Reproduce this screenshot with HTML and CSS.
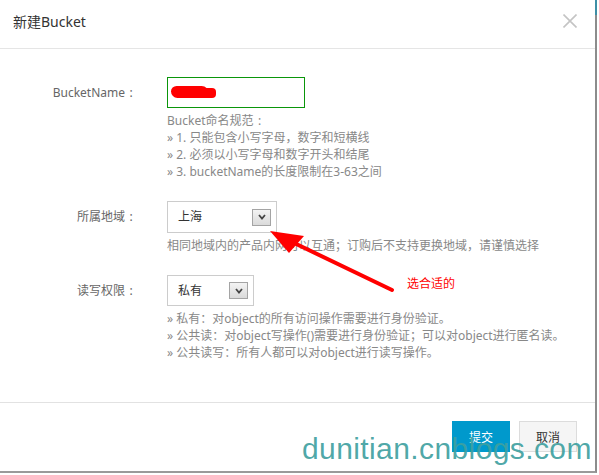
FILE: index.html
```html
<!DOCTYPE html>
<html lang="zh-CN">
<head>
<meta charset="utf-8">
<title>新建Bucket</title>
<link rel="stylesheet" href="styles.css">
</head>
<body>
<div class="dialog">
  <div class="edge-mark"></div>
  <div class="header">
    <h3 class="title">新建Bucket</h3>
    <span class="close">
      <svg width="14" height="14" viewBox="0 0 14 14"><path d="M0.5 0.5 L13.5 13.5 M13.5 0.5 L0.5 13.5" stroke="#c4c4c4" stroke-width="1.6" fill="none"/></svg>
    </span>
  </div>
  <div class="body">
    <div class="row">
      <label class="label">BucketName<span class="colon">:</span></label>
      <div class="field">
        <div class="input"><span class="scribble"></span><span class="scribble tail"></span></div>
        <div class="help">
          <div>Bucket命名规范<span class="colon">:</span></div>
          <div>» 1. 只能包含小写字母，数字和短横线</div>
          <div>» 2. 必须以小写字母和数字开头和结尾</div>
          <div>» 3. bucketName的长度限制在3-63之间</div>
        </div>
      </div>
    </div>
    <div class="row">
      <label class="label">所属地域<span class="colon">:</span></label>
      <div class="field">
        <div class="select region"><span class="value">上海</span><span class="drop"><svg width="8" height="6" viewBox="0 0 8 6"><path d="M1 1 L4 4.5 L7 1" stroke="#444" stroke-width="1.8" fill="none"/></svg></span></div>
        <div class="help">
          <div>相同地域内的产品内网可以互通；订购后不支持更换地域，请谨慎选择</div>
        </div>
      </div>
    </div>
    <div class="row">
      <label class="label">读写权限<span class="colon">:</span></label>
      <div class="field">
        <div class="select acl"><span class="value">私有</span><span class="drop"><svg width="8" height="6" viewBox="0 0 8 6"><path d="M1 1 L4 4.5 L7 1" stroke="#444" stroke-width="1.8" fill="none"/></svg></span></div>
        <div class="help">
          <div>» 私有：对object的所有访问操作需要进行身份验证。</div>
          <div>» 公共读：对object写操作()需要进行身份验证；可以对object进行匿名读。</div>
          <div>» 公共读写：所有人都可以对object进行读写操作。</div>
        </div>
      </div>
    </div>
  </div>
  <div class="footer">
    <button class="btn primary">提交</button>
    <button class="btn">取消</button>
  </div>
  <svg class="arrow" width="599" height="475" viewBox="0 0 599 475">
    <path d="M392 290 L290 241" stroke="#f00" stroke-width="4" stroke-linecap="round" fill="none"/>
    <path d="M270 231 L304 236 L289 253 Z" fill="#f00"/>
  </svg>
  <span class="note">选合适的</span>
  <span class="watermark">dunitian.cnblogs.com</span>
</div>
</body>
</html>
```

FILE: styles.css
```css
* { box-sizing: border-box; }
html, body { margin: 0; padding: 0; background: #fff; }
body {
  font-family: "Noto Sans", "Noto Sans CJK SC", sans-serif;
  font-size: 12px;
  color: #666;
}
.dialog {
  position: relative;
  width: 597px;
  height: 473px;
  border-right: 2px solid #8c8c8c;
  border-bottom: 2px solid #9a9a9a;
  background: #fff;
}
.edge-mark {
  position: absolute;
  right: -2px;
  top: 0;
  width: 2px;
  height: 15px;
  background: #3e8fa6;
}
.header {
  height: 49px;
  border-bottom: 1px solid #e5e5e5;
  display: flex;
  align-items: flex-start;
  justify-content: space-between;
  padding: 14px 18px 0 13px;
}
.title {
  margin: 0;
  font-size: 14px;
  line-height: 16px;
  font-weight: normal;
  color: #333;
  font-family: "Noto Sans", "Noto Sans CJK SC", sans-serif;
}
.close { display: block; width: 14px; height: 14px; }
.close svg { display: block; }
.body {
  padding: 28px 0 41px 0;
  display: flex;
  flex-direction: column;
  gap: 21px;
}
.row {
  display: grid;
  grid-template-columns: 137px 1fr;
  column-gap: 30px;
}
.label {
  text-align: right;
  line-height: 31px;
  height: 31px;
  color: #666;
}
.colon {
  display: inline-block;
  width: 12px;
  text-align: center;
}
.field { display: flex; flex-direction: column; align-items: flex-start; }
.input {
  width: 138px;
  height: 31px;
  border: 1px solid #0a960a;
  position: relative;
}
.scribble {
  position: absolute;
  left: 3px;
  top: 8px;
  width: 38px;
  height: 12px;
  background: #f00;
  border-radius: 6px 8px 5px 7px;
}
.scribble.tail {
  left: 28px;
  top: 10px;
  width: 20px;
  height: 10px;
  border-radius: 4px;
}
.help {
  margin-top: 4px;
  line-height: 17px;
  color: #888;
}
.select {
  height: 32px;
  border: 1px solid #ccc;
  display: flex;
  align-items: center;
  justify-content: space-between;
  padding: 0 5px 0 10px;
  color: #333;
}
.select.region { width: 110px; }
.select.acl { width: 87px; height: 31px; }
.value { line-height: 16px; }
.drop {
  width: 19px;
  height: 17px;
  border: 1px solid #a4a4a4;
  background: linear-gradient(#f3f3f3, #dadada);
  display: flex;
  align-items: center;
  justify-content: center;
}
.drop svg { display: block; }
.footer {
  border-top: 1px solid #e2e2e2;
  padding: 18px 18px 0 0;
  display: flex;
  justify-content: flex-end;
  gap: 9px;
}
.btn {
  height: 31px;
  width: 58px;
  font-family: "Noto Sans CJK SC", sans-serif;
  font-size: 12px;
  line-height: 16px;
  border: 1px solid #dcdcdc;
  background: #f5f5f5;
  color: #333;
  padding: 0;
}
.btn.primary {
  background: #0099cc;
  border-color: #0099cc;
  color: #fff;
}
.arrow {
  position: absolute;
  left: 0;
  top: 0;
  pointer-events: none;
}
.note {
  position: absolute;
  left: 407px;
  top: 274px;
  color: #f00;
  font-family: "Noto Sans CJK SC", sans-serif;
  font-size: 12px;
  line-height: 17px;
}
.watermark {
  position: absolute;
  left: 302px;
  top: 429px;
  font-family: "Liberation Sans", sans-serif;
  font-size: 30px;
  line-height: 40px;
  color: rgba(62, 160, 160, 0.92);
  letter-spacing: 0.4px;
  white-space: nowrap;
}
```
